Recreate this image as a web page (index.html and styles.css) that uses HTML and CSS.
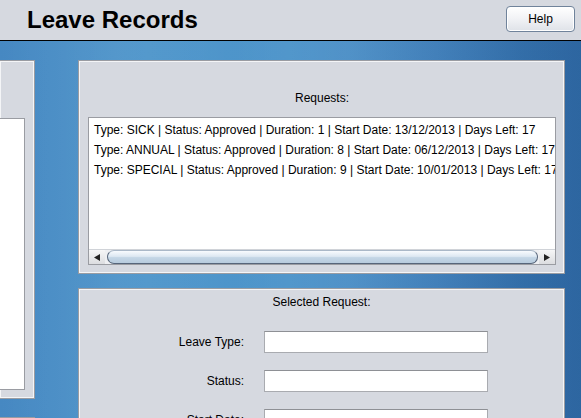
FILE: index.html
```html
<!DOCTYPE html>
<html>
<head>
<meta charset="utf-8">
<link rel="stylesheet" href="styles.css">
</head>
<body>
<header class="topbar">
  <h1 class="title">Leave Records</h1>
  <button class="help">Help</button>
</header>
<main class="desk">
  <div class="col-left">
    <section class="panel panel-left">
      <div class="white-box"></div>
    </section>
    <section class="panel panel-left-2"></section>
  </div>
  <div class="col-right">
    <section class="panel requests">
      <div class="caption">Requests:</div>
      <div class="listbox">
        <div class="lines">
          <div class="line">Type: SICK | Status: Approved | Duration: 1 | Start Date: 13/12/2013 | Days Left: 17</div>
          <div class="line">Type: ANNUAL | Status: Approved | Duration: 8 | Start Date: 06/12/2013 | Days Left: 17</div>
          <div class="line">Type: SPECIAL | Status: Approved | Duration: 9 | Start Date: 10/01/2013 | Days Left: 17</div>
        </div>
        <div class="hscroll">
          <div class="arrow arrow-left"><svg width="6" height="7" viewBox="0 0 6 7"><path d="M0 3.5 L6 0 L6 7 Z" fill="#222"/></svg></div>
          <div class="track"><div class="thumb"></div></div>
          <div class="arrow arrow-right"><svg width="6" height="7" viewBox="0 0 6 7"><path d="M6 3.5 L0 0 L0 7 Z" fill="#222"/></svg></div>
        </div>
      </div>
    </section>
    <section class="panel selected">
      <div class="caption caption-sel">Selected Request:</div>
      <div class="form">
        <label class="lbl">Leave Type:</label><div class="field"></div>
        <label class="lbl">Status:</label><div class="field"></div>
        <label class="lbl">Start Date:</label><div class="field"></div>
      </div>
    </section>
  </div>
</main>
</body>
</html>
```

FILE: styles.css
```css
* { box-sizing: border-box; }
html, body { margin: 0; padding: 0; height: 100%; overflow: hidden; }
body {
  font-family: "Liberation Sans", Arial, sans-serif;
  font-size: 12px;
  color: #000;
  background: #4a8cc4;
}
.topbar {
  height: 41px;
  background: #d6d9e0;
  border-bottom: 1px solid #000;
  display: flex;
  align-items: flex-start;
  justify-content: space-between;
  padding: 0 6px 0 27px;
}
.title {
  margin: 6px 0 0 0;
  font-size: 24px;
  font-weight: bold;
  line-height: 28px;
  color: #000;
}
.help {
  margin-top: 6px;
  width: 69px;
  height: 26px;
  border: 1px solid #70839b;
  border-radius: 4px;
  background: linear-gradient(#ffffff, #f1f2f5 50%, #dfe2e8);
  box-shadow: inset 0 0 0 1px #ffffff;
  font-family: "Liberation Sans", Arial, sans-serif;
  font-size: 12px;
  color: #000;
  padding: 0;
}
.desk {
  height: 377px;
  display: flex;
  gap: 43px;
  padding-top: 19px;
  overflow: hidden;
  background:
    linear-gradient(90deg, rgba(255,255,255,0) 0%, rgba(255,255,255,0.04) 20%, rgba(255,255,255,0) 40%, rgba(255,255,255,0.05) 60%, rgba(0,0,0,0.05) 90%),
    linear-gradient(90deg, #4688c2 0%, #4f96cb 25%, #4d94ca 50%, #3f80bd 75%, #2f6ba9 100%);
}
.panel {
  flex-shrink: 0;
  background: #d6d9e0;
  border: 1px solid #9a9ca2;
  box-shadow: inset 0 0 0 1px #f4f5f7;
}
.col-left {
  width: 35px;
  flex-shrink: 0;
  display: flex;
  flex-direction: column;
  gap: 18px;
}
.panel-left {
  height: 339px;
  border-left: none;
  padding: 57px 9px 0 0;
}
.white-box {
  height: 272px;
  background: #fff;
  border: 1px solid #9a9ca2;
  border-left: none;
}
.panel-left-2 { height: 40px; border-left: none; }
.col-right {
  width: 487px;
  flex-shrink: 0;
  display: flex;
  flex-direction: column;
  gap: 14px;
}
.requests {
  height: 214px;
  padding: 29px 8px 0 9px;
  display: flex;
  flex-direction: column;
}
.caption {
  text-align: center;
  line-height: 16px;
  height: 16px;
}
.listbox {
  margin-top: 11px;
  height: 148px;
  flex-shrink: 0;
  background: #fff;
  border: 1px solid #9a9ca2;
  display: flex;
  flex-direction: column;
  overflow: hidden;
}
.lines {
  flex: 1;
  padding: 2px 0 0 5px;
  white-space: nowrap;
  overflow: hidden;
}
.line { line-height: 20px; height: 20px; }
.hscroll {
  height: 15px;
  flex-shrink: 0;
  display: flex;
  background: #eeeff2;
  border-top: 1px solid #d0d3d8;
}
.arrow {
  width: 16px;
  display: flex;
  align-items: center;
  justify-content: center;
  background: linear-gradient(#f6f6f7, #dcdde0);
}
.track { flex: 1; padding: 0 1px 0 2px; }
.thumb {
  height: 14px;
  border: 1px solid #56657a;
  border-top-color: #aab8c8;
  border-radius: 10px;
  background: linear-gradient(#f8fbfe, #dde8f2 45%, #c4d6e6 55%, #b7cbdd);
}
.selected {
  height: 140px;
  padding-top: 5px;
}
.caption-sel { line-height: 16px; }
.form {
  margin-top: 21px;
  display: grid;
  grid-template-columns: 165px 224px;
  column-gap: 20px;
  row-gap: 17px;
}
.lbl {
  text-align: right;
  line-height: 22px;
  height: 22px;
}
.field {
  height: 22px;
  background: #fff;
  border: 1px solid #a9abb0;
  border-top-color: #8e9095;
}
```
